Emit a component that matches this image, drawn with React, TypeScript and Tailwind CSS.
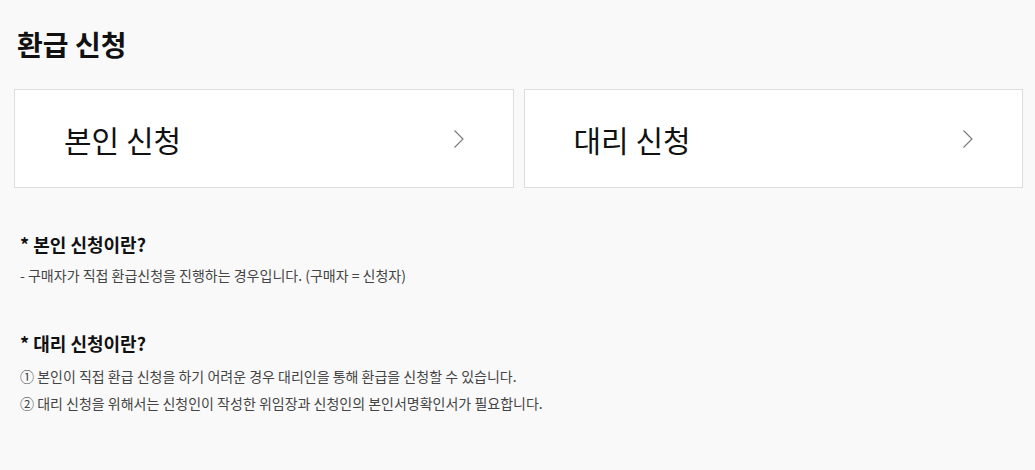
import React from 'react';

const cards = ['본인 신청', '대리 신청'];

function Chevron() {
  return (
    <svg width="12" height="20" viewBox="0 0 12 20" fill="none">
      <path d="M1.5 1.5 L10 10 L1.5 18.5" stroke="#777" strokeWidth="1.1" />
    </svg>
  );
}

export default function App() {
  return (
    <div
      className="min-h-[470px] bg-[#f9f9f9] pl-[14px] pr-[12px] pt-[24px] text-[#111]"
      style={{ fontFamily: '"Noto Sans CJK KR", "Noto Sans", sans-serif' }}
    >
      {/* Page title */}
      <h1 className="pl-[3px] text-[28px] font-bold leading-[40px]">환급 신청</h1>

      {/* Choice cards */}
      <div className="mt-[25px] grid grid-cols-2 gap-[10px]">
        {cards.map((label) => (
          <div
            key={label}
            className="flex h-[99px] items-center justify-between border border-[#dddddd] bg-white pl-[49px] pr-[48px]"
          >
            <span className="text-[30px] font-normal leading-none">{label}</span>
            <Chevron />
          </div>
        ))}
      </div>

      {/* Description */}
      <div className="mt-[43px] pl-[6px]">
        <h2 className="text-[18px] font-bold leading-[26px]">* 본인 신청이란?</h2>
        <p className="mt-[8px] text-[14px] leading-[20px] text-[#444]">
          - 구매자가 직접 환급신청을 진행하는 경우입니다. (구매자 = 신청자)
        </p>

        <h2 className="mt-[45px] text-[18px] font-bold leading-[26px]">* 대리 신청이란?</h2>
        <p className="mt-[7px] text-[14px] leading-[27px] text-[#444]">
          ① 본인이 직접 환급 신청을 하기 어려운 경우 대리인을 통해 환급을 신청할 수 있습니다.
          <br />② 대리 신청을 위해서는 신청인이 작성한 위임장과 신청인의 본인서명확인서가 필요합니다.
        </p>
      </div>
    </div>
  );
}
